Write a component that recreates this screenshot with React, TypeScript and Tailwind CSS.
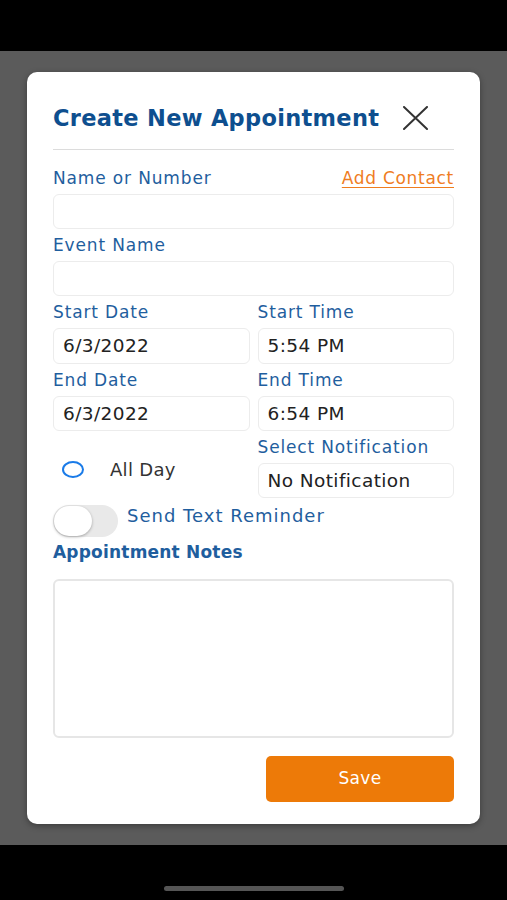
const FONT = { fontFamily: '"DejaVu Sans", "Liberation Sans", sans-serif' };

function Label({ children }: { children: React.ReactNode }) {
  return <div className="h-[22px] text-[17px] leading-[22px] tracking-[0.85px] text-[#1f5e9e]">{children}</div>;
}

function Field({ value, h = "h-[35px]" }: { value?: string; h?: string }) {
  return (
    <div className={`mt-[5px] flex ${h} items-center rounded-[6px] border border-[#ececec] px-[9px] text-[18.5px] tracking-[0.4px] text-[#222]`}>
      {value}
    </div>
  );
}

export default function App() {
  return (
    <div className="flex h-[900px] w-full flex-col bg-black" style={FONT}>
      <div className="h-[51px]" />
      <div className="h-[794px] bg-[#5b5b5b] px-[27px] pt-[21px]">
        <div className="h-[752px] rounded-[10px] bg-white px-[26px] pt-[31px] shadow-[0_2px_6px_rgba(0,0,0,0.35)]">
          <div className="flex h-[30px] items-center">
            <h1 className="text-[22.5px] font-bold leading-[30px] tracking-[0.3px] text-[#0e4f8f]">Create New Appointment</h1>
            <svg className="ml-[24px]" width="25" height="24" viewBox="0 0 25 24" fill="none" stroke="#333" strokeWidth="2" strokeLinecap="round">
              <path d="M1 1 L24 23 M24 1 L1 23" />
            </svg>
          </div>
          <div className="mt-[16px] border-t border-[#dcdcdc]" />

          <div className="mt-[17px] flex items-center justify-between">
            <Label>Name or Number</Label>
            <span className="text-[17px] leading-[22px] tracking-[0.7px] text-[#ef7d1f] underline underline-offset-[3px]">Add Contact</span>
          </div>
          <Field />

          <div className="mt-[5px]">
            <Label>Event Name</Label>
          </div>
          <Field />

          <div className="mt-[5px] grid grid-cols-2 gap-x-[8px]">
            <div>
              <Label>Start Date</Label>
              <Field value="6/3/2022" h="h-[36px]" />
            </div>
            <div>
              <Label>Start Time</Label>
              <Field value="5:54 PM" h="h-[36px]" />
            </div>
          </div>

          <div className="mt-[5px] grid grid-cols-2 gap-x-[8px]">
            <div>
              <Label>End Date</Label>
              <Field value="6/3/2022" />
            </div>
            <div>
              <Label>End Time</Label>
              <Field value="6:54 PM" />
            </div>
          </div>

          <div className="mt-[5px] grid grid-cols-2 gap-x-[8px]">
            <div className="flex items-center pl-[9px] pt-[4px]">
              <span className="h-[17px] w-[22px] rounded-[50%] border-[2.5px] border-[#1a7be8]" />
              <span className="ml-[26px] text-[18px] tracking-[0.3px] text-[#333]">All Day</span>
            </div>
            <div>
              <Label>Select Notification</Label>
              <Field value="No Notification" />
            </div>
          </div>

          <div className="mt-[7px] flex items-start">
            <div className="relative h-[32px] w-[65px] rounded-full bg-[#e9e9e9]">
              <span className="absolute left-[1px] top-[1px] h-[30px] w-[38px] rounded-full bg-white shadow-[0_1px_3px_rgba(0,0,0,0.3)]" />
            </div>
            <span className="ml-[9px] text-[18px] leading-[22px] tracking-[1px] text-[#1f5e9e]">Send Text Reminder</span>
          </div>

          <div className="mt-[4px] text-[17px] font-bold leading-[22px] tracking-[0.2px] text-[#1f5e9e]">Appointment Notes</div>

          <div className="mt-[16px] h-[159px] rounded-[6px] border-2 border-[#e6e6e6]" />

          <div className="mt-[18px] flex justify-end">
            <button className="h-[46px] w-[188px] rounded-[5px] bg-[#ed7a08] text-[17px] tracking-[0.3px] text-white">Save</button>
          </div>
        </div>
      </div>
      <div className="flex h-[55px] items-end justify-center pb-[9px]">
        <div className="h-[5px] w-[180px] rounded-full bg-[#555]" />
      </div>
    </div>
  );
}
